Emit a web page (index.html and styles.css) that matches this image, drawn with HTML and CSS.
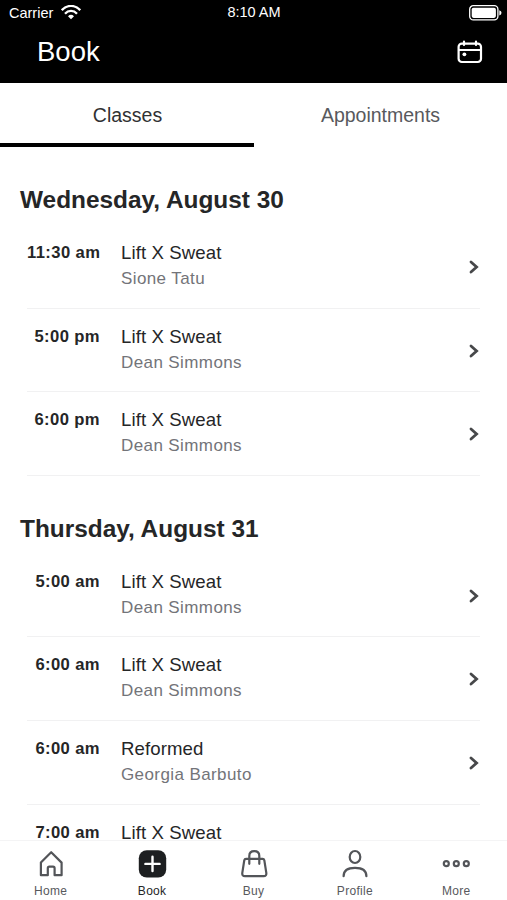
FILE: index.html
```
<!DOCTYPE html>
<html lang="en">
<head>
    <meta charset="UTF-8">
    <meta name="viewport" content="width=device-width, initial-scale=1.0">
    <title>Book</title>
    <link rel="stylesheet" href="styles.css">
</head>
<body>
    <header class="header">
        <div class="status-bar">
            <div class="carrier">
                <span>Carrier</span>
                <svg width="20" height="15" viewBox="0 0 20 15" fill="none" stroke="#fff" stroke-width="2.3">
                    <path d="M0.8 5.2C6 -0.5 14 -0.5 19.2 5.2"/>
                    <path d="M4 8.7C7.4 5 12.6 5 16 8.7"/>
                    <path d="M7 11.2Q10 8.4 13 11.2L10 14.3Z" fill="#fff" stroke="none"/>
                </svg>
            </div>
            <span class="clock">8:10 AM</span>
            <svg class="battery" width="33" height="16" viewBox="0 0 33 16">
                <rect x="0.7" y="0.7" width="28.2" height="14.2" rx="3.6" fill="none" stroke="#fff" stroke-width="1.3"/>
                <rect x="2.7" y="2.7" width="24.2" height="10.2" rx="1.8" fill="#fff"/>
                <path d="M30.3 5.2Q32.5 5.8 32.5 7.8T30.3 10.4Z" fill="#fff"/>
            </svg>
        </div>
        <div class="title-bar">
            <h1>Book</h1>
            <svg width="26" height="24" viewBox="0 0 26 24" fill="none" stroke="#fff" stroke-width="2.2" stroke-linecap="round">
                <rect x="1.6" y="3.6" width="22.4" height="18.4" rx="3.2"/>
                <path d="M2 10H24M7 1.6V5M19 1.6V5"/>
                <circle cx="7.4" cy="14.3" r="1.9" fill="#fff" stroke="none"/>
            </svg>
        </div>
    </header>

    <div class="tabs">
        <div class="tab active">Classes</div>
        <div class="tab">Appointments</div>
    </div>

    <main class="schedule">
        <h2>Wednesday, August 30</h2>
        <div class="class-row">
            <div class="time">11:30 am</div>
            <div class="info"><div class="name">Lift X Sweat</div><div class="coach">Sione Tatu</div></div>
            <svg class="chevron" viewBox="0 0 10 14"><path d="M2 2L7.6 7L2 12"/></svg>
        </div>
        <div class="class-row">
            <div class="time">5:00 pm</div>
            <div class="info"><div class="name">Lift X Sweat</div><div class="coach">Dean Simmons</div></div>
            <svg class="chevron" viewBox="0 0 10 14"><path d="M2 2L7.6 7L2 12"/></svg>
        </div>
        <div class="class-row">
            <div class="time">6:00 pm</div>
            <div class="info"><div class="name">Lift X Sweat</div><div class="coach">Dean Simmons</div></div>
            <svg class="chevron" viewBox="0 0 10 14"><path d="M2 2L7.6 7L2 12"/></svg>
        </div>

        <h2>Thursday, August 31</h2>
        <div class="class-row">
            <div class="time">5:00 am</div>
            <div class="info"><div class="name">Lift X Sweat</div><div class="coach">Dean Simmons</div></div>
            <svg class="chevron" viewBox="0 0 10 14"><path d="M2 2L7.6 7L2 12"/></svg>
        </div>
        <div class="class-row">
            <div class="time">6:00 am</div>
            <div class="info"><div class="name">Lift X Sweat</div><div class="coach">Dean Simmons</div></div>
            <svg class="chevron" viewBox="0 0 10 14"><path d="M2 2L7.6 7L2 12"/></svg>
        </div>
        <div class="class-row">
            <div class="time">6:00 am</div>
            <div class="info"><div class="name">Reformed</div><div class="coach">Georgia Barbuto</div></div>
            <svg class="chevron" viewBox="0 0 10 14"><path d="M2 2L7.6 7L2 12"/></svg>
        </div>
        <div class="class-row">
            <div class="time">7:00 am</div>
            <div class="info"><div class="name">Lift X Sweat</div></div>
            <svg class="chevron" viewBox="0 0 10 14"><path d="M2 2L7.6 7L2 12"/></svg>
        </div>
    </main>

    <nav class="bottom-nav">
        <div class="nav-item">
            <svg width="30" height="30" viewBox="0 0 30 30">
                <path d="M4.9 13.6L15.2 3.2L25.6 13.6V26.2H18.6V19.2Q18.6 17.6 17 17.6H13.4Q11.8 17.6 11.8 19.2V26.2H4.9Z"/>
            </svg>
            <span>Home</span>
        </div>
        <div class="nav-item active">
            <svg width="30" height="30" viewBox="0 0 30 30">
                <rect class="solid" x="1.8" y="1.2" width="27.4" height="27.4" rx="8"/>
                <path class="plus" d="M15.5 7.8V22M8.4 14.9H22.6"/>
            </svg>
            <span>Book</span>
        </div>
        <div class="nav-item">
            <svg width="30" height="30" viewBox="0 0 30 30">
                <path d="M7 9.8H23.6Q25 9.8 25.3 11.2L27.3 23.8Q27.7 27.2 24.6 27.2H6Q2.9 27.2 3.3 23.8L5.3 11.2Q5.6 9.8 7 9.8Z"/>
                <path d="M10.3 14.8V7Q10.3 2.2 15.3 2.2T20.3 7V14.8"/>
            </svg>
            <span>Buy</span>
        </div>
        <div class="nav-item">
            <svg width="30" height="30" viewBox="0 0 30 30">
                <ellipse cx="15" cy="8" rx="5.3" ry="6"/>
                <path d="M3.6 27.2C3.6 21.5 8 18.9 15 18.9S26.4 21.5 26.4 27.2"/>
            </svg>
            <span>Profile</span>
        </div>
        <div class="nav-item">
            <svg width="30" height="30" viewBox="0 0 30 30">
                <circle cx="5.3" cy="14.7" r="2.5"/>
                <circle cx="15.3" cy="14.7" r="2.5"/>
                <circle cx="25.3" cy="14.7" r="2.5"/>
            </svg>
            <span>More</span>
        </div>
    </nav>
</body>
</html>
```
FILE: styles.css
```
* {
    margin: 0;
    padding: 0;
    box-sizing: border-box;
}

body {
    height: 900px;
    display: flex;
    flex-direction: column;
    overflow: hidden;
    background: #fff;
    color: #252627;
    font-family: "Liberation Sans", Arial, sans-serif;
}

svg {
    display: block;
}

/* Header */
.header {
    flex: none;
    height: 83px;
    background: #000;
    color: #fff;
}

.status-bar {
    display: grid;
    grid-template-columns: 1fr auto 1fr;
    align-items: center;
    height: 25px;
    padding: 0 5px 0 9px;
    font-size: 14.5px;
}

.carrier {
    display: flex;
    align-items: center;
    gap: 8px;
}

.clock {
    padding: 0 3px 2px 0;
}

.battery {
    justify-self: end;
}

.title-bar {
    display: flex;
    align-items: center;
    justify-content: space-between;
    height: 54px;
    padding: 0 24px 0 37px;
}

h1 {
    font-size: 27.5px;
    font-weight: normal;
}

/* Tabs */
.tabs {
    flex: none;
    display: flex;
    height: 64px;
}

.tab {
    flex: 1;
    border-bottom: 4px solid transparent;
    color: #58595d;
    font-size: 19.5px;
    line-height: 64px;
    text-align: center;
}

.tab.active {
    padding-left: 1px;
    border-color: #000;
    color: #303133;
}

/* Class list */
.schedule {
    flex: 1;
    min-height: 0;
    overflow: hidden;
}

h2 {
    height: 78px;
    padding-left: 20px;
    font-size: 24.4px;
    line-height: 106px;
}

.class-row {
    display: flex;
    height: 83.6px;
    margin: 0 27px;
    padding-top: 15px;
    border-bottom: 1px solid #f1f1f2;
}

.time {
    width: 73px;
    margin-right: 21px;
    font-size: 16.6px;
    font-weight: bold;
    letter-spacing: 0.4px;
    line-height: 25px;
    text-align: right;
    white-space: nowrap;
}

.info {
    flex: 1;
}

.name {
    font-size: 18.6px;
    letter-spacing: 0.1px;
    line-height: 25px;
}

.coach {
    color: #737479;
    font-size: 17px;
    letter-spacing: 0.4px;
    line-height: 27px;
}

.chevron {
    width: 10px;
    height: 14px;
    margin-top: 20px;
    margin-right: 1px;
    fill: none;
    stroke: #47484a;
    stroke-width: 2.8;
    stroke-linecap: round;
}

/* Bottom navigation */
.bottom-nav {
    flex: none;
    display: flex;
    height: 60px;
    border-top: 1px solid #f4f4f5;
    background: #fff;
}

.nav-item {
    flex: 1;
    display: flex;
    flex-direction: column;
    align-items: center;
    padding-top: 8px;
    color: #58595d;
    font-size: 12px;
    letter-spacing: 0.3px;
}

.nav-item svg {
    margin-bottom: 5px;
    fill: none;
    stroke: #535559;
    stroke-width: 2.2;
    stroke-linejoin: round;
    stroke-linecap: round;
}

.nav-item.active {
    color: #252627;
}

.nav-item .solid {
    fill: #1d1f21;
    stroke: none;
}

.nav-item .plus {
    stroke: #fff;
    stroke-width: 2.4;
}
```
